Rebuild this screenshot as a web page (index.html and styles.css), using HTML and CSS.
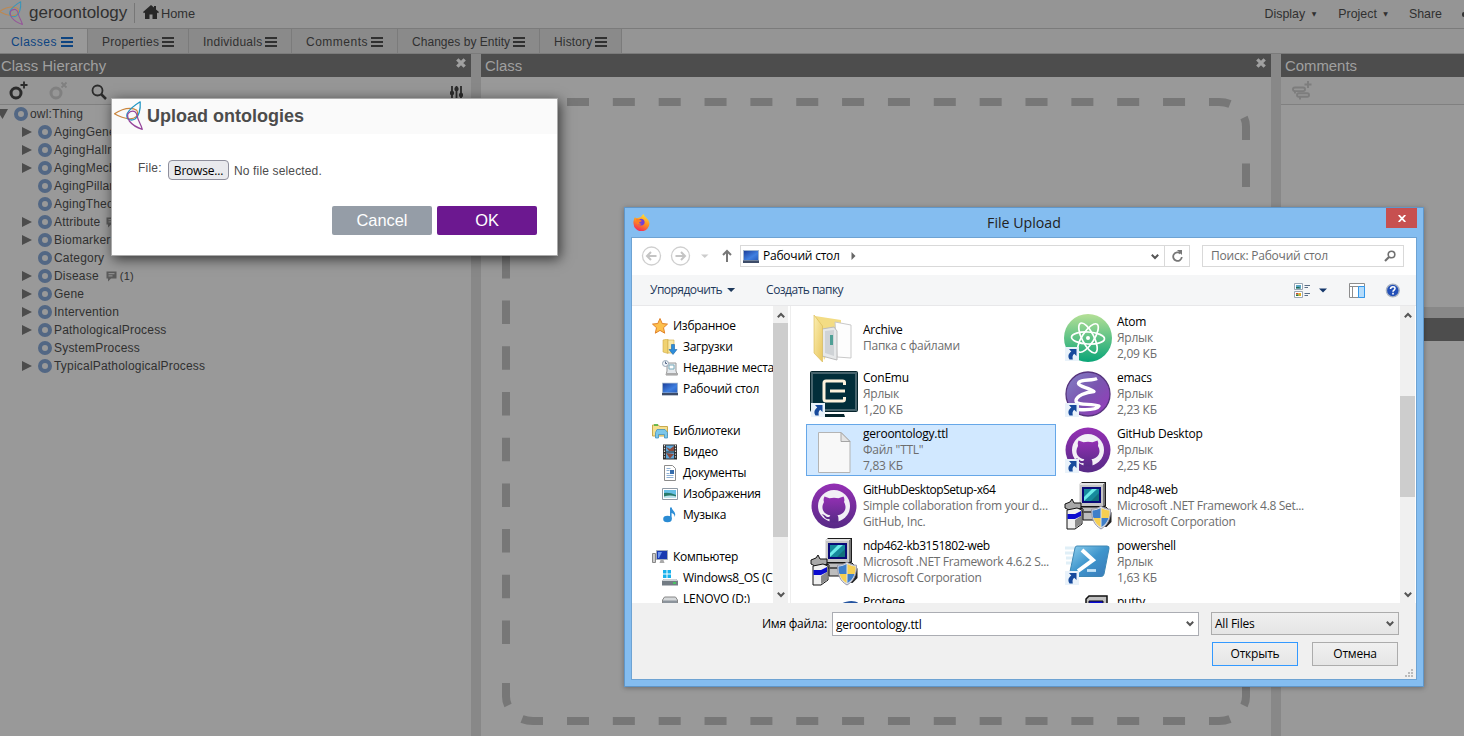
FILE: index.html
```html
<!DOCTYPE html>
<html lang="en">
<head>
<meta charset="utf-8">
<title>geroontology</title>
<link rel="stylesheet" href="styles.css">
</head>
<body>
<svg class="defs" width="0" height="0">
  <defs>
    <linearGradient id="gAtom" x1="0" y1="0" x2="0" y2="1"><stop offset="0" stop-color="#b5e096"/><stop offset="1" stop-color="#0aa577"/></linearGradient>
    <linearGradient id="gEmacs" x1="0" y1="0" x2="1" y2="1"><stop offset="0" stop-color="#8381c5"/><stop offset=".5" stop-color="#7a55b0"/><stop offset="1" stop-color="#9a38bd"/></linearGradient>
    <linearGradient id="gGit" x1="0" y1="0" x2="0" y2="1"><stop offset="0" stop-color="#9430b4"/><stop offset="1" stop-color="#572a86"/></linearGradient>
    <linearGradient id="gPs" x1="0" y1="0" x2="1" y2="1"><stop offset="0" stop-color="#8fd0ee"/><stop offset=".5" stop-color="#3e95cc"/><stop offset="1" stop-color="#3a79b8"/></linearGradient>
    <linearGradient id="gScreen" x1="0" y1="0" x2="1" y2="1"><stop offset="0" stop-color="#1c3f9c"/><stop offset=".6" stop-color="#3f7fe0"/><stop offset="1" stop-color="#2a5fc0"/></linearGradient>
    <linearGradient id="gFolder" x1="0" y1="0" x2="1" y2="1"><stop offset="0" stop-color="#fbeeb2"/><stop offset="1" stop-color="#e8c65e"/></linearGradient>
    <linearGradient id="gFox" x1=".7" y1="0" x2=".3" y2="1"><stop offset="0" stop-color="#ffe23c"/><stop offset=".5" stop-color="#ff9020"/><stop offset="1" stop-color="#f0245c"/></linearGradient>
    <symbol id="logo" viewBox="0 0 29 29">
      <g fill="none" stroke-width="1.25" stroke-linejoin="round">
        <path d="M.5 12.800C6 9 11 7.300 16 7.300Q20 7.300 22.700 9.300Q24.600 12.500 22.500 15.500Q19.500 18 15.500 17.800C10 17.500 5 15.500 .5 12.800Z" stroke="#c9863f"/>
        <path d="M26.200 .8C21 4 15.500 8.500 13.300 12.300Q12 15.500 14 18Q17.500 20 21 18Q24 15.800 25.200 11.500C26.300 8 26.400 4 26.200 .8Z" stroke="#2296c4"/>
        <path d="M28.300 28.300C22.500 26.500 18 23.500 15.300 20Q12.800 16 14 12.600Q16.500 9.500 20 10.300Q22.800 11.500 23.300 15.700C24 19.500 27 23.500 28.300 28.300Z" stroke="#96459b"/>
      </g>
    </symbol>
    <symbol id="burger" viewBox="0 0 12 10"><path d="M0 1h12M0 5h12M0 9h12" stroke="currentColor" stroke-width="2"/></symbol>
    <symbol id="cross" viewBox="0 0 10 10"><path d="M1.300 1.300l7.400 7.400M8.700 1.300l-7.400 7.400" stroke="currentColor" stroke-width="3.300"/></symbol>
    <symbol id="note" viewBox="0 0 11 11"><path d="M.5.5h10v7H5L2 10.500v-3H.5z" fill="#5b5b5b"/><path d="M2.500 2.700h6M2.500 4.900h4" stroke="#999"/></symbol>
    <symbol id="lnk" viewBox="0 0 14 14"><path d="M0 0h14v14H0z" fill="#e9f2fa"/><path d="M4 2h7.500v7l-2.300-2.200C7.300 8.200 7.400 10 7.800 12.500H4.500C2.500 9 3.500 6.500 6.300 4.400z" fill="#174a9c"/></symbol>
    <symbol id="chev" viewBox="0 0 8 6"><path d="M.8.8L4 4l3.200-3.200" fill="none" stroke="#555" stroke-width="2"/></symbol>
    <symbol id="desk" viewBox="0 0 16 13"><path d="M0 0h16v13H0z" fill="#9fb4cd"/><path d="M1 1h14v9H1z" fill="url(#gScreen)"/><path d="M0 10.500h16V13H0z" fill="#3d4c68"/></symbol>
    <symbol id="octo" viewBox="0 0 48 48">
      <circle cx="24" cy="24" r="22.500" fill="url(#gGit)"/><circle cx="24" cy="24" r="16" fill="#f2eff6"/>
      <path d="M14.500 14.500l5 1.800q4.500-1 9 0l5-1.800q1.500 3 .5 5.500c4 7-.5 12.500-6.500 13.200 1.200 1.500 1 4 1 7.300h-9V37c-5 1-5-3.500-8-4.500 4-.8 4 3.500 8 2.300l.8-1.600c-6-.7-10.300-6.200-6.300-13.200q-1-2.500.5-5.500z" fill="url(#gGit)"/>
    </symbol>
    <symbol id="setup" viewBox="0 0 48 48">
      <path d="M16 2l2-2h24v24l-3 3H16z" fill="#1c1c1c"/><path d="M15 2l2-1h24l-2 2H17v21h-2z" fill="#e2e2e2"/><path d="M16 3h23v21H16z" fill="#c6c6c6"/><path d="M39 3l2-2v22l-2 2z" fill="#777"/>
      <path d="M18 5h19v16H18z" fill="#090a78"/><path d="M20 7h15v12H20z" fill="#168a9c"/><path d="M20 15l8-8h5L20 19z" fill="#6cecea"/><path d="M27 19l8-8v8z" fill="#12707c"/>
      <path d="M14 25h28l4 4v9H19V27z" fill="#bdbdbd" stroke="#111"/><path d="M18 30h25" stroke="#555" stroke-width="2"/>
      <path d="M1 22l5-2 2-3 2 4h7v5l-5 2H5l-4-2z" fill="#a8a8a8" stroke="#111"/>
      <path d="M3 28l10-2 5 2v14l-7 5H3z" fill="#f0f0f0" stroke="#111"/><path d="M3.500 32H11l6-3v5l-6 3H3.500z" fill="#0b0bd0"/><path d="M11 38l6-4v8l-6 4z" fill="#8a8a8a"/>
      <path d="M44 34l3.500-4v10l-5 5-6-1z" fill="#222"/>
      <path d="M37 24c3 2.500 6 3.200 9.500 3.200C46.500 37 44 43 37 47c-7-4-9.500-10-9.500-19.800 3.500 0 6.500-.7 9.500-3.200z" fill="#dfe3e8" stroke="#99a"/>
      <path d="M36.500 26v10h-7c-.8-2-1-4.500-1-7.500 3 0 5.500-.9 8-2.500zM37.500 36h7c-1.300 4-3.500 7-7 9z" fill="#3f7fc9"/><path d="M37.500 26c2.500 1.600 5 2.500 8 2.500 0 3-.2 5.500-1 7.500h-7zM36.500 36v9c-3.500-2-5.700-5-7-9z" fill="#f6cf52"/>
    </symbol>
  </defs>
</svg>

<div class="app">
  <header class="topbar">
    <svg class="brand-logo"><use href="#logo"/></svg>
    <span class="brand">geroontology</span>
    <a class="home"><svg width="16" height="14" viewBox="0 0 16 14"><path d="M8 0L0 7l1 1.200 1-.8V14h4.500V9.500h3V14H14V7.400l1 .8L16 7l-3-2.600V1h-2v1.600z" fill="#282828"/></svg>Home</a>
    <nav class="menu"><span>Display <i>▼</i></span><span>Project <i>▼</i></span><span>Share</span><b></b></nav>
  </header>
  <nav class="tabs">
    <span class="tab active t1">Classes<svg><use href="#burger"/></svg></span>
    <span class="tab t2">Properties<svg><use href="#burger"/></svg></span>
    <span class="tab t3">Individuals<svg><use href="#burger"/></svg></span>
    <span class="tab t4">Comments<svg><use href="#burger"/></svg></span>
    <span class="tab t5">Changes by Entity<svg><use href="#burger"/></svg></span>
    <span class="tab t6">History<svg><use href="#burger"/></svg></span>
  </nav>
  <main class="panels">
    <section class="panel hierarchy">
      <h2>Class Hierarchy<svg><use href="#cross"/></svg></h2>
      <div class="tools">
        <svg width="108" height="27" viewBox="0 0 108 27" fill="none">
          <circle cx="16" cy="16" r="5" stroke="#2b2b2b" stroke-width="3"/><path d="M20.500 8h7M24 4.500v7" stroke="#2b2b2b" stroke-width="1.800"/>
          <circle cx="56" cy="16" r="5" stroke="#808080" stroke-width="3"/><path d="M61.500 5.500l5 5M66.500 5.500l-5 5" stroke="#808080" stroke-width="1.800"/>
          <circle cx="97.500" cy="13.500" r="5" stroke="#2b2b2b" stroke-width="1.800"/><path d="M101 17l5 5" stroke="#2b2b2b" stroke-width="2.500"/>
        </svg>
        <svg class="sliders" width="13" height="12" viewBox="0 0 13 12"><path d="M2 0v12M6.500 0v12M11 0v12" stroke="#2b2b2b" stroke-width="1.800"/><circle cx="2" cy="7" r="2.200" fill="#2b2b2b"/><circle cx="6.500" cy="3" r="2.200" fill="#2b2b2b"/><circle cx="11" cy="9" r="2.200" fill="#2b2b2b"/></svg>
      </div>
      <ul class="tree">
        <li class="root"><i class="down"></i><b></b>owl:Thing</li>
        <li><i></i><b></b>AgingGene</li>
        <li><i></i><b></b>AgingHallmark</li>
        <li><i></i><b></b>AgingMechanism</li>
        <li class="leaf"><i></i><b></b>AgingPillar</li>
        <li class="leaf"><i></i><b></b>AgingTheory</li>
        <li class="attr"><i></i><b></b>Attribute<svg><use href="#note"/></svg></li>
        <li><i></i><b></b>Biomarker</li>
        <li class="leaf"><i></i><b></b>Category</li>
        <li><i></i><b></b>Disease<svg><use href="#note"/></svg><small>(1)</small></li>
        <li><i></i><b></b>Gene</li>
        <li><i></i><b></b>Intervention</li>
        <li><i></i><b></b>PathologicalProcess</li>
        <li class="leaf"><i></i><b></b>SystemProcess</li>
        <li><i></i><b></b>TypicalPathologicalProcess</li>
      </ul>
    </section>
    <section class="panel detail">
      <h2>Class<svg><use href="#cross"/></svg></h2>
      <svg class="dropzone" width="790" height="659" viewBox="481 77 790 659" fill="none" stroke="#777" stroke-width="8">
        <path d="M567 102H1190M567 721H1190" stroke-dasharray="22 23.850"/>
        <path d="M506 163.500V665M1246 163.500V665" stroke-dasharray="23.500 22.200"/>
        <path d="M1209 102h10q6 0 11 2M1209 721h10q6 0 11-2M543 102h-10q-6 0-11 2M543 721h-10q-6 0-11-2"/>
        <path d="M1244 117.500q2 4 2 9v13.500M508 117.500q-2 4-2 9v13.500M1246 683v13.500q0 5-2 9M506 683v13.500q0 5 2 9"/>
      </svg>
    </section>
    <div class="side">
      <section class="panel comments">
        <h2>Comments</h2>
        <div class="tools"><svg class="addc" width="21" height="20" viewBox="0 0 21 20" fill="none" stroke="#7d7d7d" stroke-width="1.900"><rect x="2" y="7.500" width="12" height="3.600" rx="1.800"/><rect x="6" y="13.200" width="12" height="3.600" rx="1.800"/><path d="M4 11v2.500M9 17v2.500M13.500 4.500h7M17 1v7"/></svg></div>
      </section>
      <section class="panel feed"><h2></h2></section>
    </div>
  </main>
</div>

<div class="modal">
  <h1><svg><use href="#logo"/></svg>Upload ontologies</h1>
  <div class="field"><label>File:</label><span class="browse">Browse...</span><span class="none">No file selected.</span></div>
  <div class="actions"><span class="btn">Cancel</span><span class="btn ok">OK</span></div>
</div>

<div class="win">
  <div class="titlebar">
    <svg class="fox" width="17" height="17" viewBox="0 0 17 17"><path d="M8 3Q9 1 10.500 0q.5 2 3 4 2.500 2 3 5a8 8 0 0 1-16 .5Q0 6 2 3l1 1.500z" fill="url(#gFox)"/><path d="M5 6.500Q7 4 10 5.200q2.500 2 1.200 4.800-2.500 2.800-6 .5Q3.500 8 5 6.500z" fill="#7240d8"/><path d="M3 4.500l3 .8 3 1.700-3 1.500q.5 1.500 2.800 1.200-2 2-4.800.3z" fill="#ff7d24"/></svg>
    <span>File Upload</span>
    <b class="close"><svg width="8" height="7" viewBox="0 0 8 7"><path d="M.7 0l6.600 7M7.300 0L.7 7" stroke="#fff" stroke-width="1.800"/></svg></b>
  </div>
  <div class="client">
    <div class="navrow">
      <svg width="98" height="20" viewBox="0 0 98 20" fill="none">
        <circle cx="10.500" cy="10" r="9" stroke="#cfcfcf" stroke-width="1.300"/><path d="M15.500 10H6.500M10 6l-4 4 4 4" stroke="#c4c4c4" stroke-width="2"/>
        <circle cx="39.500" cy="10" r="9" stroke="#cfcfcf" stroke-width="1.300"/><path d="M34.500 10h9M40 6l4 4-4 4" stroke="#c4c4c4" stroke-width="2"/>
        <path d="M60 8.500h7.500L63.750 12z" fill="#ccc"/>
        <path d="M86 16V5.500M82 9l4-4 4 4" stroke="#777" stroke-width="2"/>
      </svg>
      <div class="address"><svg width="16" height="13"><use href="#desk"/></svg><span>Рабочий стол</span><svg class="arr" width="5" height="8" viewBox="0 0 5 8"><path d="M.5 0L4.500 4l-4 4z" fill="#666"/></svg><svg class="dd" width="8" height="6"><use href="#chev"/></svg></div>
      <div class="refresh"><svg width="11" height="12" viewBox="0 0 11 12"><path d="M8.500 3.500A4.300 4.300 0 1 0 9.800 7" fill="none" stroke="#777" stroke-width="1.800"/><path d="M5 0h5v5z" fill="#777"/></svg></div>
      <div class="search"><span>Поиск: Рабочий стол</span><svg width="12" height="12" viewBox="0 0 12 12"><circle cx="7.500" cy="4.500" r="3.300" fill="none" stroke="#707070" stroke-width="1.600"/><path d="M5 7l-4 4" stroke="#707070" stroke-width="2.200"/></svg></div>
    </div>
    <div class="cmdrow">
      <span class="organize">Упорядочить</span><i class="tri"></i><span class="newf">Создать папку</span>
      <svg width="106" height="17" viewBox="0 0 106 17">
        <path d="M.5 1.500h8v6h-8zM.5 9.500h8v6h-8z" fill="#fff" stroke="#9aa7b5"/><path d="M2 3h5v3.500H2z" fill="#5ba6c4"/><path d="M2 5l3 0 2 1.500H2z" fill="#1f6a56"/><path d="M2 11h2.500v1.500H2z" fill="#d54a2b"/><path d="M4.500 11H7v3H4.500z" fill="#e0ad20"/><path d="M2 12.500h2.500V14H2z" fill="#2b7a3a"/>
        <path d="M10.500 3.500h5.500M10.500 5.500h3.500M10.500 11.500h5.500M10.500 13.500h3.500" stroke="#5b6f87"/>
        <path d="M25 6.500h8L29 10.500z" fill="#15376b"/>
        <path d="M55.500 1.500h15v14h-15zM55.500 4.500h15M58.500 4.500v11" fill="#fff" stroke="#8d8d8d"/><path d="M64.500 4.500h6v11h-6z" fill="#b5dcfb" stroke="#3397ea"/>
        <circle cx="98.800" cy="8.500" r="6.400" fill="#2350b8" stroke="#aab4c2" stroke-width="1.400"/><path d="M96.500 7q.2-2.300 2.400-2.300T101 6.600c0 1.500-2 1.500-2 3.200M99 10.800v1.700" fill="none" stroke="#fff" stroke-width="1.600"/>
      </svg>
    </div>
    <div class="body">
      <div class="places">
        <div class="pl"><svg viewBox="0 0 16 16"><path d="M8 .5l2.200 5 5.300.6-4 3.600 1.200 5.500L8 12.400l-4.700 2.800 1.200-5.500-4-3.600 5.300-.6z" fill="#fdc04c" stroke="#e0812a"/></svg>Избранное</div>
        <div class="pl sub"><svg viewBox="0 0 16 16"><path d="M1 1l5-1v14.500L1 13z" fill="#f0d272" stroke="#d0ab48" stroke-width=".6"/><path d="M6 1h6v13H6z" fill="#f8e8a8" stroke="#d0ab48" stroke-width=".6"/><path d="M9.500 5.500h3v5H15L11 15.500 7 10.500h2.500z" fill="#2d8ddb" stroke="#1d67ab" stroke-width=".6"/></svg>Загрузки</div>
        <div class="pl sub"><svg viewBox="0 0 16 16"><path d="M5 3h9v8l1.500 4H4l1-4z" fill="#e4e8ec" stroke="#999"/><path d="M7 5h5v4H7z" fill="#fff" stroke="#7ab"/><path d="M4 13h12v2H4z" fill="#aaa"/><circle cx="3.500" cy="3.500" r="3" fill="#eef3f8" stroke="#99a8b8"/><path d="M3.500 1.500v2h1.500" stroke="#568" fill="none"/></svg>Недавние места</div>
        <div class="pl sub"><svg viewBox="0 -1.500 16 16"><use href="#desk" width="16" height="13"/></svg>Рабочий стол</div>
        <div class="pl"></div>
        <div class="pl"><svg viewBox="0 0 16 16"><path d="M.5 3V2h6l1 1.500h8V13H.5z" fill="#f5e08e" stroke="#c8aa50"/><path d="M2 2h4" stroke="#42b03a" stroke-width="1.500"/><path d="M5 6.500h8l2.500 3V15h-3v-3.500h-6V15h-3V9.500z" fill="#7cc7ea" stroke="#4592c0" stroke-width=".8"/></svg>Библиотеки</div>
        <div class="pl sub"><svg viewBox="0 0 16 16"><path d="M1 .5h14v15H1z" fill="#2c2c2c"/><path d="M4 1.500h8v6H4zM4 8.500h8v6H4z" fill="#5ea8dc"/><path d="M4 3l4 2 4-3v5H7zM4 9l8 1-4 4.500z" fill="#8b493b"/><path d="M2.500 1v14M13.500 1v14" stroke="#ddd" stroke-width="1.200" stroke-dasharray="1.400 1.400"/></svg>Видео</div>
        <div class="pl sub"><svg viewBox="0 0 16 16"><path d="M2.500.5h8l3 3v12h-11z" fill="#fff" stroke="#8c8c8c"/><path d="M4.500 3.500h4M4.500 5.500h3M4.500 8.500h3M4.500 10.500h7M4.500 12.500h7" stroke="#8fb2d6"/><path d="M8 5h4v4H8z" fill="#356dac"/></svg>Документы</div>
        <div class="pl sub"><svg viewBox="0 0 16 16"><path d="M.5 2.500h15v11H.5z" fill="#fff" stroke="#8f9aa5"/><path d="M2 4h12v8H2z" fill="#65bfe5"/><path d="M2 7q5-1 12 2v3H2z" fill="#287b6b"/><path d="M2 10.500q6-2 12 0V12H2z" fill="#bce3ed"/></svg>Изображения</div>
        <div class="pl sub"><svg viewBox="0 0 16 16"><ellipse cx="5.500" cy="12" rx="4.300" ry="3.200" fill="#2a8bd3"/><path d="M8 12V.5h1.800c0 3.500 4.800 3.500 3 9.500-.3-2.500-1.500-3.500-3.200-4V12z" fill="#318fd6"/></svg>Музыка</div>
        <div class="pl"></div>
        <div class="pl"><svg viewBox="0 0 16 16"><path d="M.5 4.500h3v9h-3z" fill="#ccc" stroke="#888"/><path d="M4.500 1.500h11v9h-11z" fill="#1939b0" stroke="#a4acb8"/><path d="M6 3h4L7 9H6z" fill="#6a94ee"/><path d="M8.500 11h3l1 3h-5z" fill="#aaa"/></svg>Компьютер</div>
        <div class="pl sub"><svg viewBox="0 0 16 16"><path d="M1 0h3.500v3.500H1zM5.500 0H9v3.500H5.500zM1 4.500h3.500V8H1zM5.500 4.500H9V8H5.500z" fill="#18b1ec"/><path d="M2 9h12l2 2v4.500H0V11z" fill="#737c84"/><path d="M2 9h12l2 2H0z" fill="#cdd2d6"/><path d="M11 13h3" stroke="#3bdc5a" stroke-width="1.500"/></svg>Windows8_OS (C:)</div>
        <div class="pl sub"><svg viewBox="0 0 16 16"><path d="M2.500 6h11l2 3v4H.500V9z" fill="#d5d8da" stroke="#888"/><path d="M1 9.500h14V13H1z" fill="#8c949c"/></svg>LENOVO (D:)</div>
      </div>
      <div class="scroll nav"><svg><use href="#chev"/></svg><b></b><svg><use href="#chev"/></svg></div>
      <div class="files">
        <div class="file"><svg viewBox="0 0 48 48"><path d="M5 2l26 4v9L14 46z" fill="#f3dc84"/><path d="M25 8l16 3v33l-14-1z" fill="#fdfdfd" stroke="#c9c9c9"/><path d="M12 15l12-2 3 4v29l-15-4z" fill="#e6e8e9" stroke="#bbb"/><path d="M15 17l9-1v26l-9-3z" fill="#cfd3d6"/><path d="M20 21h3v10h-3z" fill="#4f9f95"/><path d="M4 1l8.500 11v36L4 39z" fill="url(#gFolder)" stroke="#d8b852" stroke-width=".6"/></svg><p><b>Archive</b><span>Папка с файлами</span></p></div>
        <div class="file"><svg viewBox="0 0 48 48"><rect x=".5" y="1.500" width="47" height="40" rx="1" fill="#47646d" stroke="#06242c"/><path d="M3 4h42v35H3z" fill="#022e3a"/><path d="M34.500 15v-2.500q0-1.500-2-1.500H16q-2 0-2 2V29q0 2 2 2h16.500q2 0 2-2v-2M20 21h15" fill="none" stroke="#fdf2dc" stroke-width="3"/><path d="M14 44h20l1 3H13z" fill="#06242c"/><use href="#lnk" x="1" y="33" width="14" height="14"/></svg><p><b>ConEmu</b><span>Ярлык</span><span>1,20 КБ</span></p></div>
        <div class="file sel"><svg viewBox="0 0 48 48"><path d="M8.500 6.500H31l9 9v31H8.500z" fill="#f8f8f8" stroke="#b4b4b4"/><path d="M31 6.500v9h9z" fill="#e4e4e4" stroke="#a5a5a5"/></svg><p><b>geroontology.ttl</b><span>Файл "TTL"</span><span>7,83 КБ</span></p></div>
        <div class="file"><svg><use href="#octo"/></svg><p><b class="long">GitHubDesktopSetup-x64</b><span>Simple collaboration from your d...</span><span>GitHub, Inc.</span></p></div>
        <div class="file"><svg><use href="#setup"/></svg><p><b class="long">ndp462-kb3151802-web</b><span class="net">Microsoft .NET Framework 4.6.2 S...</span><span>Microsoft Corporation</span></p></div>
        <div class="file"><svg viewBox="0 0 48 48"><ellipse cx="38" cy="14" rx="12" ry="6.500" fill="#2454a0" transform="rotate(-14 38 14)"/></svg><p><b>Protege</b><span>Ярлык</span><span>1,00 КБ</span></p></div>
        <div class="file"><svg viewBox="0 0 48 48"><circle cx="24" cy="24" r="24" fill="url(#gAtom)"/><g fill="none" stroke="#fff" stroke-width="1.700"><ellipse cx="24" cy="24" rx="16.500" ry="6" transform="rotate(3 24 24)"/><ellipse cx="24" cy="24" rx="16.500" ry="6" transform="rotate(63 24 24)"/><ellipse cx="24" cy="24" rx="16.500" ry="6" transform="rotate(123 24 24)"/></g><circle cx="24" cy="24" r="2" fill="#fff"/><use href="#lnk" x="1" y="33" width="14" height="14"/></svg><p><b>Atom</b><span>Ярлык</span><span>2,09 КБ</span></p></div>
        <div class="file"><svg viewBox="0 0 48 48"><circle cx="24" cy="24" r="22" fill="url(#gEmacs)" stroke="#56347d" stroke-width="1.300"/><path d="M33 8.500C28 11 15 9 14.500 13.500 15 17 25 17.500 30 21.500 22 22 12 26 12 31c1 5 16 2 23 5-2 4-12 4-21 3.500" fill="none" stroke="#fff" stroke-width="3.400" stroke-linejoin="round"/><use href="#lnk" x="1" y="33" width="14" height="14"/></svg><p><b>emacs</b><span>Ярлык</span><span>2,23 КБ</span></p></div>
        <div class="file"><svg viewBox="0 0 48 48"><use href="#octo" width="48" height="48"/><use href="#lnk" x="1" y="33" width="14" height="14"/></svg><p><b>GitHub Desktop</b><span>Ярлык</span><span>2,25 КБ</span></p></div>
        <div class="file"><svg><use href="#setup"/></svg><p><b>ndp48-web</b><span class="net">Microsoft .NET Framework 4.8 Set...</span><span>Microsoft Corporation</span></p></div>
        <div class="file"><svg viewBox="0 0 48 48"><path d="M1 10h10M1 15h9M2 20h7M2 25h5" stroke="#e0eff7" stroke-width="3"/><path d="M13 8h30q2.500 0 2 2.500L40 36q-.5 2.500-3 2.500H7q-2 0-1.500-2.500L11 10q.3-2 2-2z" fill="url(#gPs)" stroke="#3e88b5"/><path d="M18 12l11 10-15 11" fill="none" stroke="#fff" stroke-width="4"/><path d="M23 32.500h9" stroke="#c4e4f8" stroke-width="2.800"/><use href="#lnk" x="1" y="33" width="14" height="14"/></svg><p><b>powershell</b><span>Ярлык</span><span>1,63 КБ</span></p></div>
        <div class="file"><svg viewBox="0 0 48 48"><path d="M22 5l3-3h18v20H22z" fill="#c0c0c0" stroke="#111" stroke-width="1.500"/><path d="M25 7h14v14H25z" fill="#0a0ad8" stroke="#111"/></svg><p><b>putty</b><span>Ярлык</span><span>1,00 КБ</span></p></div>
      </div>
      <div class="scroll list"><svg><use href="#chev"/></svg><b></b><svg><use href="#chev"/></svg></div>
    </div>
    <div class="foot">
      <span class="flabel">Имя файла:</span>
      <div class="fname">geroontology.ttl<svg><use href="#chev"/></svg></div>
      <div class="right">
        <div class="ftype">All Files<svg><use href="#chev"/></svg></div>
        <div class="fbtns"><span class="open">Открыть</span><span>Отмена</span></div>
      </div>
      <svg class="grip" width="9" height="9" viewBox="0 0 9 9"><path d="M6 0h2v2H6zM3 3h2v2H3zM6 3h2v2H6zM0 6h2v2H0zM3 6h2v2H3zM6 6h2v2H6z" fill="#bbb"/></svg>
    </div>
  </div>
</div>
</body>
</html>
```

FILE: styles.css
```css
* { box-sizing: border-box; }
body { margin: 0; width: 1464px; height: 736px; overflow: hidden; background: #999; color: #303030; font: 12px/18px "Liberation Sans", Arial, sans-serif; }
.defs { position: absolute; }
svg { display: block; flex: none; }
.app { height: 736px; display: flex; flex-direction: column; }

.topbar { height: 29px; display: flex; align-items: center; border-bottom: 1px solid #7b7b7b; background: #959595; overflow: hidden; }
.brand-logo { width: 24px; height: 24px; margin: -2px 0 0 -1px; opacity: .8; }
.brand { width: 105px; margin-left: 6px; margin-top: -2px; font-size: 17px; }
.home { height: 20px; margin-top: -2px; padding: 2px 0 0 8px; display: flex; align-items: center; gap: 2px; border-left: 1px solid #777; font-size: 12.8px; }
.home svg { margin-top: -5px; }
.menu { margin-left: auto; display: flex; align-items: center; font-size: 12.4px; }
.menu span { margin-right: 22px; white-space: nowrap; }
.menu span:nth-child(2) { margin-right: 21px; }
.menu span:nth-child(3) { margin-right: 20px; }
.menu i { font: 6px "DejaVu Sans", sans-serif; margin-left: 3px; vertical-align: 2px; }
.menu b { width: 2px; height: 5px; background: #333; border-radius: 2px 0 0 2px; }

.tabs { height: 25px; display: flex; border-bottom: 1px solid #7b7b7b; background: #959595; letter-spacing: .15px; }
.tab { display: flex; align-items: center; padding: 1px 0 0 14px; background: #8a8a8a; border-right: 1px solid #7b7b7b; white-space: nowrap; }
.tab svg { width: 12px; height: 10px; margin-left: auto; margin-right: 14px; }
.tab.active { background: #999; color: #0d4481; padding-left: 11px; letter-spacing: .45px; }
.t1 { width: 88px; } .t2 { width: 101px; letter-spacing: .25px; } .t3 { width: 103px; letter-spacing: .25px; } .t4 { width: 106px; letter-spacing: .5px; } .t5 { width: 142px; letter-spacing: .04px; } .t6 { width: 82px; }

.panels { flex: 1; display: flex; gap: 10px; background: #888; min-height: 0; }
.panel { background: #999; }
.panel h2 { height: 23px; margin: 0; padding-left: 4px; display: flex; background: #4d4d4d; color: #a0a0a0; font-size: 14.9px; font-weight: normal; line-height: 24px; }
.panel h2 svg { width: 10px; height: 10px; margin: 4px 5px 0 auto; }
.hierarchy { width: 471px; } .hierarchy h2 { padding-left: 1px; }
.detail { width: 790px; }
.side { flex: 1; display: flex; flex-direction: column; gap: 11px; }
.comments { height: 253px; } .feed { flex: 1; }
.tools { height: 28px; display: flex; border-bottom: 1px solid #808080; background: #969696; }
.sliders { margin: 9px 8px 0 auto; }
.addc { margin: 3px 0 0 10px; }
.tree { margin: 0; padding: 0; list-style: none; letter-spacing: .2px; }
.tree li { height: 18px; display: flex; align-items: center; padding-left: 22px; }
.tree i { width: 10px; height: 10px; background: #4c4c4c; clip-path: polygon(0 0, 100% 50%, 0 100%); }
.tree .leaf i { visibility: hidden; }
.tree b { width: 14px; height: 14px; margin: 0 2px 0 6px; border: 4px solid #526784; border-radius: 50%; flex: none; }
.tree .root { padding-left: 0; }
.tree .root i { clip-path: polygon(0 0, 80% 0, 25% 100%, 0 60%); }
.tree .root b { margin-left: 4px; }
.tree svg { width: 11px; height: 11px; margin: 1px 3px 0 7px; }
.tree .attr svg { margin-left: 5px; }
.tree small { font-size: 11px; }

.modal { position: absolute; left: 111px; top: 98px; width: 447px; height: 158px; border: 1px solid #aaa; background: #fff; box-shadow: 2px 3px 12px rgba(0,0,0,.65); color: #4c4c4c; }
.modal h1 { height: 35px; margin: 0; padding: 0 2px 2px; display: flex; align-items: center; gap: 4px; background: #fafafa; font-size: 18px; }
.modal h1 svg { width: 29px; height: 29px; }
.field { display: flex; padding: 26px 0 0 26px; }
.field label { line-height: 17px; width: 30px; letter-spacing: .2px; }
.browse { width: 61px; height: 20px; border: 1px solid #8f8f9d; border-radius: 4px; background: #e9e9ed; color: #000; font: 12px/19px "Open Sans", sans-serif; text-align: center; letter-spacing: -.2px; }
.none { line-height: 22px; margin-left: 5px; letter-spacing: .15px; }
.actions { display: flex; justify-content: flex-end; gap: 5px; padding: 24px 20px 0 0; }
.btn { width: 100px; height: 29px; border-radius: 2px; background: #959da7; color: #fff; font-size: 16.4px; line-height: 29px; text-align: center; }
.btn.ok { background: #6c1890; }

.win { position: absolute; left: 624px; top: 207px; width: 800px; height: 480px; border: 1px solid #6096c8; background: #84bdf0; box-shadow: 0 1px 5px rgba(0,0,0,.3); color: #000; font: 12px/16px "Open Sans", "Noto Sans", sans-serif; letter-spacing: -.22px; padding: 0 6px 6px; white-space: nowrap; }
.titlebar { height: 29px; display: flex; }
.fox { margin: 6px 0 0 2px; }
.titlebar span { flex: 1; text-align: center; font-size: 14.2px; line-height: 30px; letter-spacing: 0; color: #222; padding-left: 12px; }
.close { width: 31px; height: 20px; background: #c75050; display: flex; align-items: center; justify-content: center; }
.client { height: 443px; border: 1px solid #6ea3d3; background: #fff; display: flex; flex-direction: column; }
.navrow { height: 37px; display: flex; padding: 7px 12px 0 9px; }
.navrow > svg { margin-top: 1px; }
.address, .search, .refresh { height: 22px; border: 1px solid #d9d9d9; display: flex; align-items: center; }
.address { width: 425px; padding-left: 2px; margin-left: 1px; }
.address span { margin: 0 11px 0 4px; }
.address .dd { margin: 2px 5px 0 auto; }
.refresh { width: 26px; margin-left: -1px; padding-left: 7px; }
.search { width: 202px; margin-left: 12px; padding: 0 7px 0 8px; color: #6d6d6d; }
.search svg { margin-left: auto; }
.cmdrow { height: 31px; display: flex; align-items: center; background: #f5f6f7; border-bottom: 1px solid #e8e8ea; color: #1e395b; padding-left: 18px; letter-spacing: -.52px; }
.cmdrow svg { margin: 0 16px 0 auto; }
.tri { width: 8px; height: 4px; margin-left: 5px; background: #1e395b; clip-path: polygon(0 0, 100% 0, 50% 100%); }
.newf { margin-left: 31px; }
.body { height: 297px; display: flex; overflow: hidden; }
.places { width: 141px; padding-top: 9px; overflow: hidden; letter-spacing: -.27px; }
.pl { height: 21px; display: flex; align-items: center; gap: 5px; padding-left: 20px; }
.pl.sub { padding-left: 30px; }
.pl svg { width: 16px; height: 16px; }
.scroll { width: 15px; background: #f0f0f0; display: flex; flex-direction: column; align-items: center; }
.scroll svg { width: 8px; height: 6px; margin: 6px 0 5px; }
.scroll svg:first-child { transform: rotate(180deg); }
.scroll svg:last-child { margin-top: auto; }
.scroll b { width: 15px; background: #cdcdcd; }
.nav b { height: 214px; }
.list { margin-right: 1px; }
.list b { margin-top: 73px; height: 101px; }
.files { flex: 1; border-left: 1px solid #eee; margin-left: 2px; padding: 6px 0 0 15px; display: grid; grid-template-rows: repeat(6, 52px); grid-auto-columns: 250px; grid-auto-flow: column; gap: 4px; }
.file { display: flex; gap: 5px; align-items: center; padding-left: 4px; }
.file svg { width: 48px; height: 48px; }
.file.sel { background: #d1e8ff; border: 1px solid #66a7e8; padding-left: 3px; }
.file p { margin: 0; display: flex; flex-direction: column; color: #6d6d6d; letter-spacing: -.25px; }
.file p b { font-weight: normal; color: #000; }
.file .long { letter-spacing: -.44px; }
.file .net { letter-spacing: -.32px; }
.foot { flex: 1; display: flex; background: #f0f0f0; padding-top: 9px; position: relative; }
.flabel { width: 200px; padding: 4px 5px 0 0; text-align: right; }
.fname { width: 367px; height: 24px; border: 1px solid #abadb3; background: #fff; padding: 0 4px 0 3px; line-height: 23px; display: flex; align-items: center; }
.fname svg, .ftype svg { width: 8px; height: 6px; margin-left: auto; }
.right { margin-left: 12px; width: 188px; }
.ftype { height: 23px; border: 1px solid #acacac; background: linear-gradient(#efefef, #e5e5e5); display: flex; align-items: center; padding: 0 4px 0 3px; }
.fbtns { display: flex; justify-content: space-between; margin: 7px 1px 0; }
.fbtns span { width: 86px; height: 24px; border: 1px solid #acacac; background: linear-gradient(#f0f0f0, #e5e5e5); text-align: center; line-height: 22px; }
.fbtns .open { border-color: #3399ff; }
.grip { position: absolute; right: 2px; bottom: 1px; }
```
